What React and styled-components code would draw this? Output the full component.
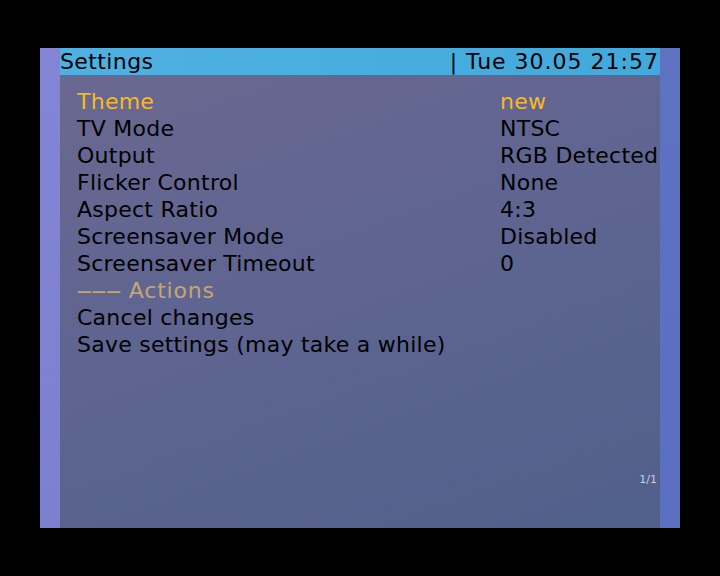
import React from "react";
import styled, { createGlobalStyle } from "styled-components";

const GlobalStyle = createGlobalStyle`
    html, body {
        margin: 0;
        padding: 0;
        background: #000;
    }
    body {
        font-family: "DejaVu Sans", Verdana, sans-serif;
    }
`;

const Screen = styled.div`
    width: 720px;
    height: 576px;
    background: #000;
    padding: 48px 40px;
    box-sizing: border-box;
    display: flex;
`;

const SideStripe = styled.div`
    width: 20px;
    flex: none;
    background: ${(p) => p.$color};
`;

const Panel = styled.div`
    flex: 1;
    display: flex;
    flex-direction: column;
`;

const TitleBar = styled.div`
    height: 27px;
    line-height: 27px;
    background: linear-gradient(90deg, #4fb1e1, #42a9dc);
    color: #000;
    font-size: 22px;
    letter-spacing: 0.4px;
    display: flex;
    justify-content: space-between;
    padding: 0 2px 0 0;
    white-space: nowrap;
`;

const Clock = styled.span`
    letter-spacing: 1px;
    margin-right: -1px;
`;

const Body = styled.div`
    flex: 1;
    position: relative;
    background: linear-gradient(160deg, #6a6890 0%, #5e6590 45%, #50608a 100%);
    padding: 13px 0 0 17px;
`;

const Row = styled.div`
    display: grid;
    grid-template-columns: 423px 1fr;
    height: 27px;
    line-height: 27px;
    font-size: 22px;
    letter-spacing: 0.25px;
    white-space: nowrap;
    color: ${(p) => (p.$selected ? "#f8b828" : p.$header ? "#c4a676" : "#000")};
`;

const Dashes = styled.span`
    font-size: 14.6px;
    font-weight: bold;
    letter-spacing: 0;
    vertical-align: 2px;
    margin-right: 8px;
`;

const ActionsLabel = styled.span`
    letter-spacing: 0.8px;
`;

const PageNumber = styled.div`
    position: absolute;
    right: 3px;
    bottom: 42px;
    font-size: 11px;
    color: #c8cce0;
`;

const items = [
    { label: "Theme", value: "new", selected: true },
    { label: "TV Mode", value: "NTSC" },
    { label: "Output", value: "RGB Detected" },
    { label: "Flicker Control", value: "None" },
    { label: "Aspect Ratio", value: "4:3" },
    { label: "Screensaver Mode", value: "Disabled" },
    { label: "Screensaver Timeout", value: "0" },
];

export default function App() {
    return (
        <>
            <GlobalStyle />
            <Screen>
                <SideStripe $color="linear-gradient(180deg, #8484d4, #7c80d0)" />
                <Panel>
                    <TitleBar>
                        <span>Settings</span>
                        <Clock>| Tue 30.05 21:57</Clock>
                    </TitleBar>
                    <Body>
                        {items.map((it) => (
                            <Row key={it.label} $selected={it.selected}>
                                <span>{it.label}</span>
                                <span>{it.value}</span>
                            </Row>
                        ))}
                        <Row $header>
                            <span>
                                <Dashes>———</Dashes>
                                <ActionsLabel>Actions</ActionsLabel>
                            </span>
                        </Row>
                        <Row>
                            <span>Cancel changes</span>
                        </Row>
                        <Row>
                            <span>Save settings (may take a while)</span>
                        </Row>
                        <PageNumber>1/1</PageNumber>
                    </Body>
                </Panel>
                <SideStripe $color="linear-gradient(180deg, #5e72c2, #5a6fc0)" />
            </Screen>
        </>
    );
}
